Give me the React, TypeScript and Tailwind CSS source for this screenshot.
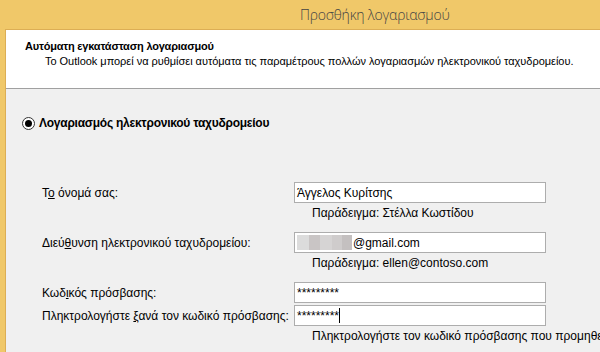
import React from "react";

function Field({
  label,
  value,
  hint,
  caret,
  blurred,
}: {
  label: React.ReactNode;
  value: React.ReactNode;
  hint?: string;
  caret?: boolean;
  blurred?: boolean;
}) {
  return (
    <div className="flex flex-col">
      <div className="flex items-center">
        <div className="w-[252px] text-[12px] text-black whitespace-nowrap">{label}</div>
        <div className="w-[252px] h-[21px] bg-white border border-[#adadad] flex items-center pl-[2px] text-[12px] text-black">
          {blurred && (
            <span className="flex h-[15px] mr-[1px]">
              <span className="w-[12px] bg-[#dcdcdc]" />
              <span className="w-[11px] bg-[#c9c5c5]" />
              <span className="w-[12px] bg-[#d6d4d4]" />
              <span className="w-[10px] bg-[#cfcccc]" />
              <span className="w-[10px] bg-[#c4c0c0]" />
            </span>
          )}
          <span>{value}</span>
          {caret && <span className="w-px h-[15px] bg-black" />}
        </div>
      </div>
      {hint && (
        <div className="pl-[270px] pt-[2px] text-[12px] leading-[16px] text-black whitespace-nowrap">{hint}</div>
      )}
    </div>
  );
}

export default function App() {
  return (
    <div
      className="w-[600px] h-[352px] bg-[#f0c869] flex flex-col overflow-hidden"
      style={{ fontFamily: '"Liberation Sans", Arial, sans-serif' }}
    >
      <div
        className="h-[29px] shrink-0 flex items-center pl-[300px] text-[14px] tracking-[-0.2px] text-[#444]"
        style={{ fontFamily: '"Open Sans", "Noto Sans", sans-serif', fontWeight: 300 }}
      >
        Προσθήκη λογαριασμού
      </div>
      <div className="flex-1 ml-[5px] border-l border-t border-[#dcae55] flex flex-col">
        <div className="h-[59px] shrink-0 bg-white border-b border-[#a0a0a0] pl-[19px] pt-[9px]">
          <div className="text-[11px] font-bold tracking-[-0.2px] text-black leading-[15px] whitespace-nowrap">
            Αυτόματη εγκατάσταση λογαριασμού
          </div>
          <div className="text-[11px] tracking-[-0.03px] text-black leading-[15px] pl-[20px] whitespace-nowrap">
            Το Outlook μπορεί να ρυθμίσει αυτόματα τις παραμέτρους πολλών λογαριασμών ηλεκτρονικού ταχυδρομείου.
          </div>
        </div>
        <div className="flex-1 bg-[#f0f0f0] pl-[16px] pt-[25px]">
          <div className="flex items-center gap-[4px]">
            <span className="w-[13px] h-[13px] rounded-full border border-[#333] bg-white flex items-center justify-center">
              <span className="w-[7px] h-[7px] rounded-full bg-black" />
            </span>
            <span className="text-[12px] font-bold tracking-[-0.25px] text-black whitespace-nowrap">
              Λογαριασμός ηλεκτρονικού ταχυδρομείου
            </span>
          </div>
          <div className="pl-[20px] pt-[50px] flex flex-col">
            <Field
              label={<>Τ<span className="underline">ο</span> όνομά σας:</>}
              value="Άγγελος Κυρίτσης"
              hint="Παράδειγμα: Στέλλα Κωστίδου"
            />
            <div className="h-[11px]" />
            <Field
              label={<>Διεύ<span className="underline">θ</span>υνση ηλεκτρονικού ταχυδρομείου:</>}
              value="@gmail.com"
              hint="Παράδειγμα: ellen@contoso.com"
              blurred
            />
            <div className="h-[11px]" />
            <Field label={<>Κωδ<span className="underline">ι</span>κός πρόσβασης:</>} value="*********" />
            <div className="h-[2px]" />
            <Field
              label={<>Πληκτρολογήστε <span className="underline">ξ</span>ανά τον κωδικό πρόσβασης:</>}
              value="*********"
              caret
              hint="Πληκτρολογήστε τον κωδικό πρόσβασης που προμηθευτήκατε από την υπηρεσία Internet."
            />
          </div>
        </div>
      </div>
    </div>
  );
}
